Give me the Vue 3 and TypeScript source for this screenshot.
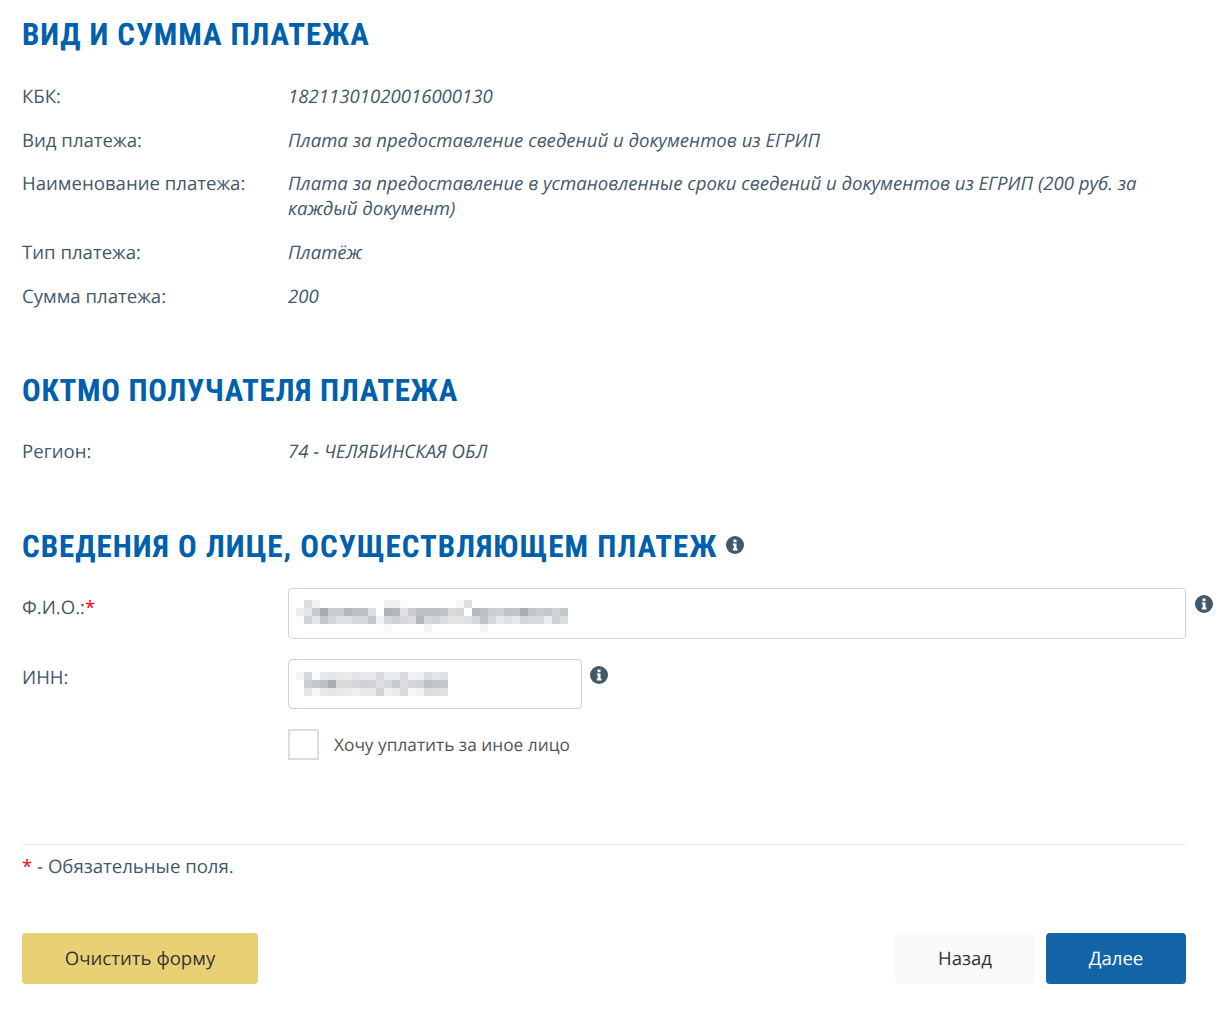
<script setup lang="ts">
const summary = [
  { label: 'КБК:', value: '18211301020016000130' },
  { label: 'Вид платежа:', value: 'Плата за предоставление сведений и документов из ЕГРИП' },
  {
    label: 'Наименование платежа:',
    value: 'Плата за предоставление в установленные сроки сведений и документов из ЕГРИП (200 руб. за каждый документ)',
  },
  { label: 'Тип платежа:', value: 'Платёж' },
  { label: 'Сумма платежа:', value: '200' },
]

// пикселизованные значения полей, по 8px на клетку
const nameCells = [
  'fff dcdcdc f2f2f2 fff fff fff fff fff fff fff fff efeff0 efefef fbfbfb fff fff fff fff fff fff f5f6f5 dcdee0 fff fff fff fff fff fff fff fff fff fff fff fff',
  'ececec e4e5e6 c8cbce a5abb0 c9ccd0 c9ccd0 b4b8bd bcc0c4 bdc1c5 dcdee0 fff aeb2b7 b4b7bb dfe0e2 c9cbce bcbfc3 bfc2c5 bcc0c4 c0c3c7 d8dadc d4d6d8 fff b4bbc0 bcc1c5 cdd0d2 cfd1d3 c0c4c7 c3c6c9 a9aeb2 c3c6c9 c9ccce c6c9cb d2d4d6 c2c7cb',
  'fbfbfb d2d4d7 e4e6e8 c1c7cc d4d6d9 e0e1e3 dfe0e2 d6d8da d6d8da c4c8cc f0f1f2 d5d7d9 cfd1d4 d7d8da dcddde b4b8bc d6d7d9 d3d4d6 dcdde0 e2e3e4 e3e4e5 e1e2e3 d6d7d9 c0c3c6 d6d7d9 e8e8e8 e0e1e2 e8e9ea d3d5d6 dadbdd d8d9db ebecec ced0d2 dcdddf',
  'fff fff fff fff fff fff fff fff fff fff fdfdfd fafafa fff fff fff fff f3f3f3 fff fff fff fff fff fff f2f3f3 fff fff fff fff fff fff fff fff fff fff',
].map((r) => r.split(' '))

const innCells = [
  'f5f5f5 d5d7da fbfbfb e8e9ea e4e6e7 e8eaea e9ebeb e2e3e5 e7e8ea e7e8ea d8dadd e9eaec e9eaec d8dadd f0f1f1 eff0f0 dbdde0 e4e5e7 e0e2e4',
  'fff cdd0d3 c5c9cd bcc1c6 a9adb1 d8dadc d9dbdd d3d5d7 cfd1d4 d0d2d5 dcdee0 d6d8da c8cbce dcdde0 d4d6d8 d2d4d6 bcc0c4 c1c4c8 c5c8cb',
  'fff e5e6e7 f5f7f6 e7e9e8 e6e7e8 e8e9eb e9eaec eff0ef e8e9ea e7e8ea d2d4d7 eff0f0 e9eaec d8dadd f6f7f6 f1f2f1 dcdde0 dcdee0 e0e1e4',
].map((r) => r.split(' '))
</script>

<template>
  <main class="page">
    <h2 class="title">Вид и сумма платежа</h2>
    <div class="rows">
      <div v-for="row in summary" :key="row.label" class="row">
        <div class="label">{{ row.label }}</div>
        <div class="value">{{ row.value }}</div>
      </div>
    </div>

    <h2 class="title second">ОКТМО получателя платежа</h2>
    <div class="rows region">
      <div class="row">
        <div class="label">Регион:</div>
        <div class="value">74 - ЧЕЛЯБИНСКАЯ ОБЛ</div>
      </div>
    </div>

    <h2 class="title third">
      Сведения о лице, осуществляющем платеж
      <svg class="info" viewBox="0 0 18 18"><circle cx="9" cy="9" r="9" /><path d="M7.5 3.6h3v2.6h-3zM6.8 7.4h3.7v5.2h1v1.8H6.8v-1.8h1v-3.4h-1z" fill="#fff" /></svg>
    </h2>
    <div class="field">
      <label class="label">Ф.И.О.:<span class="req">*</span></label>
      <div class="input wide">
        <div v-for="(cells, r) in nameCells" :key="r" class="pixels">
          <i v-for="(c, i) in cells" :key="i" :style="{ background: '#' + c }"></i>
        </div>
      </div>
      <svg class="info side" viewBox="0 0 18 18"><circle cx="9" cy="9" r="9" /><path d="M7.5 3.6h3v2.6h-3zM6.8 7.4h3.7v5.2h1v1.8H6.8v-1.8h1v-3.4h-1z" fill="#fff" /></svg>
    </div>
    <div class="field inn">
      <label class="label">ИНН:</label>
      <div class="input short">
        <div v-for="(cells, r) in innCells" :key="r" class="pixels">
          <i v-for="(c, i) in cells" :key="i" :style="{ background: '#' + c }"></i>
        </div>
      </div>
      <svg class="info" viewBox="0 0 18 18"><circle cx="9" cy="9" r="9" /><path d="M7.5 3.6h3v2.6h-3zM6.8 7.4h3.7v5.2h1v1.8H6.8v-1.8h1v-3.4h-1z" fill="#fff" /></svg>
    </div>
    <div class="check-row">
      <span class="box"></span>
      <span class="check-text">Хочу уплатить за иное лицо</span>
    </div>

    <div class="note"><span class="req">*</span> - Обязательные поля.</div>

    <div class="actions">
      <button class="btn clear">Очистить форму</button>
      <div class="nav">
        <button class="btn back">Назад</button>
        <button class="btn next">Далее</button>
      </div>
    </div>
  </main>
</template>

<style scoped>
.page {
  width: 1164px;
  padding: 15px 46px 30px 22px;
  font-family: "Open Sans", sans-serif;
  font-size: 18.6px;
  line-height: 25px;
  color: #42596a;
  text-rendering: geometricPrecision;
}

.title {
  margin: 0;
  font-family: "Roboto", sans-serif;
  font-stretch: 75%;
  font-size: 31px;
  line-height: 40px;
  font-weight: 700;
  letter-spacing: 0.9px;
  text-transform: uppercase;
  color: #0060ac;
}

.title .info {
  vertical-align: 3px;
}

.second {
  margin-top: 62px;
  letter-spacing: 0.7px;
}

.third {
  margin-top: 63px;
  letter-spacing: 1px;
}

.rows {
  display: flex;
  flex-direction: column;
  gap: 18.7px;
  margin-top: 29px;
}

.region {
  margin-top: 28px;
}

.row {
  display: flex;
}

.label {
  flex: 0 0 266px;
}

.value {
  flex: 1;
  font-style: italic;
}

.info {
  width: 18px;
  height: 18px;
  fill: #42596a;
  flex: none;
}

.field {
  display: flex;
  align-items: flex-start;
  margin-top: 21px;
}

.field .label {
  padding-top: 7px;
}

.field .info {
  margin: 7px 0 0 9px;
}

.field .side {
  margin-right: -27px;
}

.inn {
  margin-top: 20px;
}

.inn .label {
  padding-top: 6px;
}

.inn .info {
  margin-left: 8px;
}

.input {
  box-sizing: border-box;
  height: 51px;
  padding: 11px 7px 0;
  border: 1px solid #cfd5dc;
  border-radius: 4px;
  background: #fff;
}

.wide {
  flex: 1;
}

.short {
  width: 294px;
  height: 50px;
  padding-top: 12px;
}

.pixels {
  display: flex;
}

.pixels i {
  flex: none;
  width: 8px;
  height: 8px;
}

.check-row {
  display: flex;
  align-items: center;
  gap: 15px;
  margin: 20px 0 0 266px;
  font-size: 17.3px;
  color: #555;
}

.check-text {
  padding-top: 2px;
}

.box {
  box-sizing: border-box;
  width: 31px;
  height: 31px;
  border: 2px solid #ddd;
}

.note {
  margin-top: 84px;
  padding-top: 9px;
  border-top: 1px solid #eee;
}

.req {
  color: #f00;
}

.actions {
  display: flex;
  justify-content: space-between;
  margin-top: 54px;
}

.nav {
  display: flex;
  gap: 11px;
}

.btn {
  height: 51px;
  border: 0;
  border-radius: 4px;
  font: 18.6px "Open Sans", sans-serif;
  text-rendering: geometricPrecision;
  color: #333;
}

.clear {
  width: 236px;
  background: #ead074;
}

.back {
  width: 140px;
  background: #f9f9f9;
}

.next {
  width: 140px;
  background: #1464a8;
  color: #fff;
}
</style>
